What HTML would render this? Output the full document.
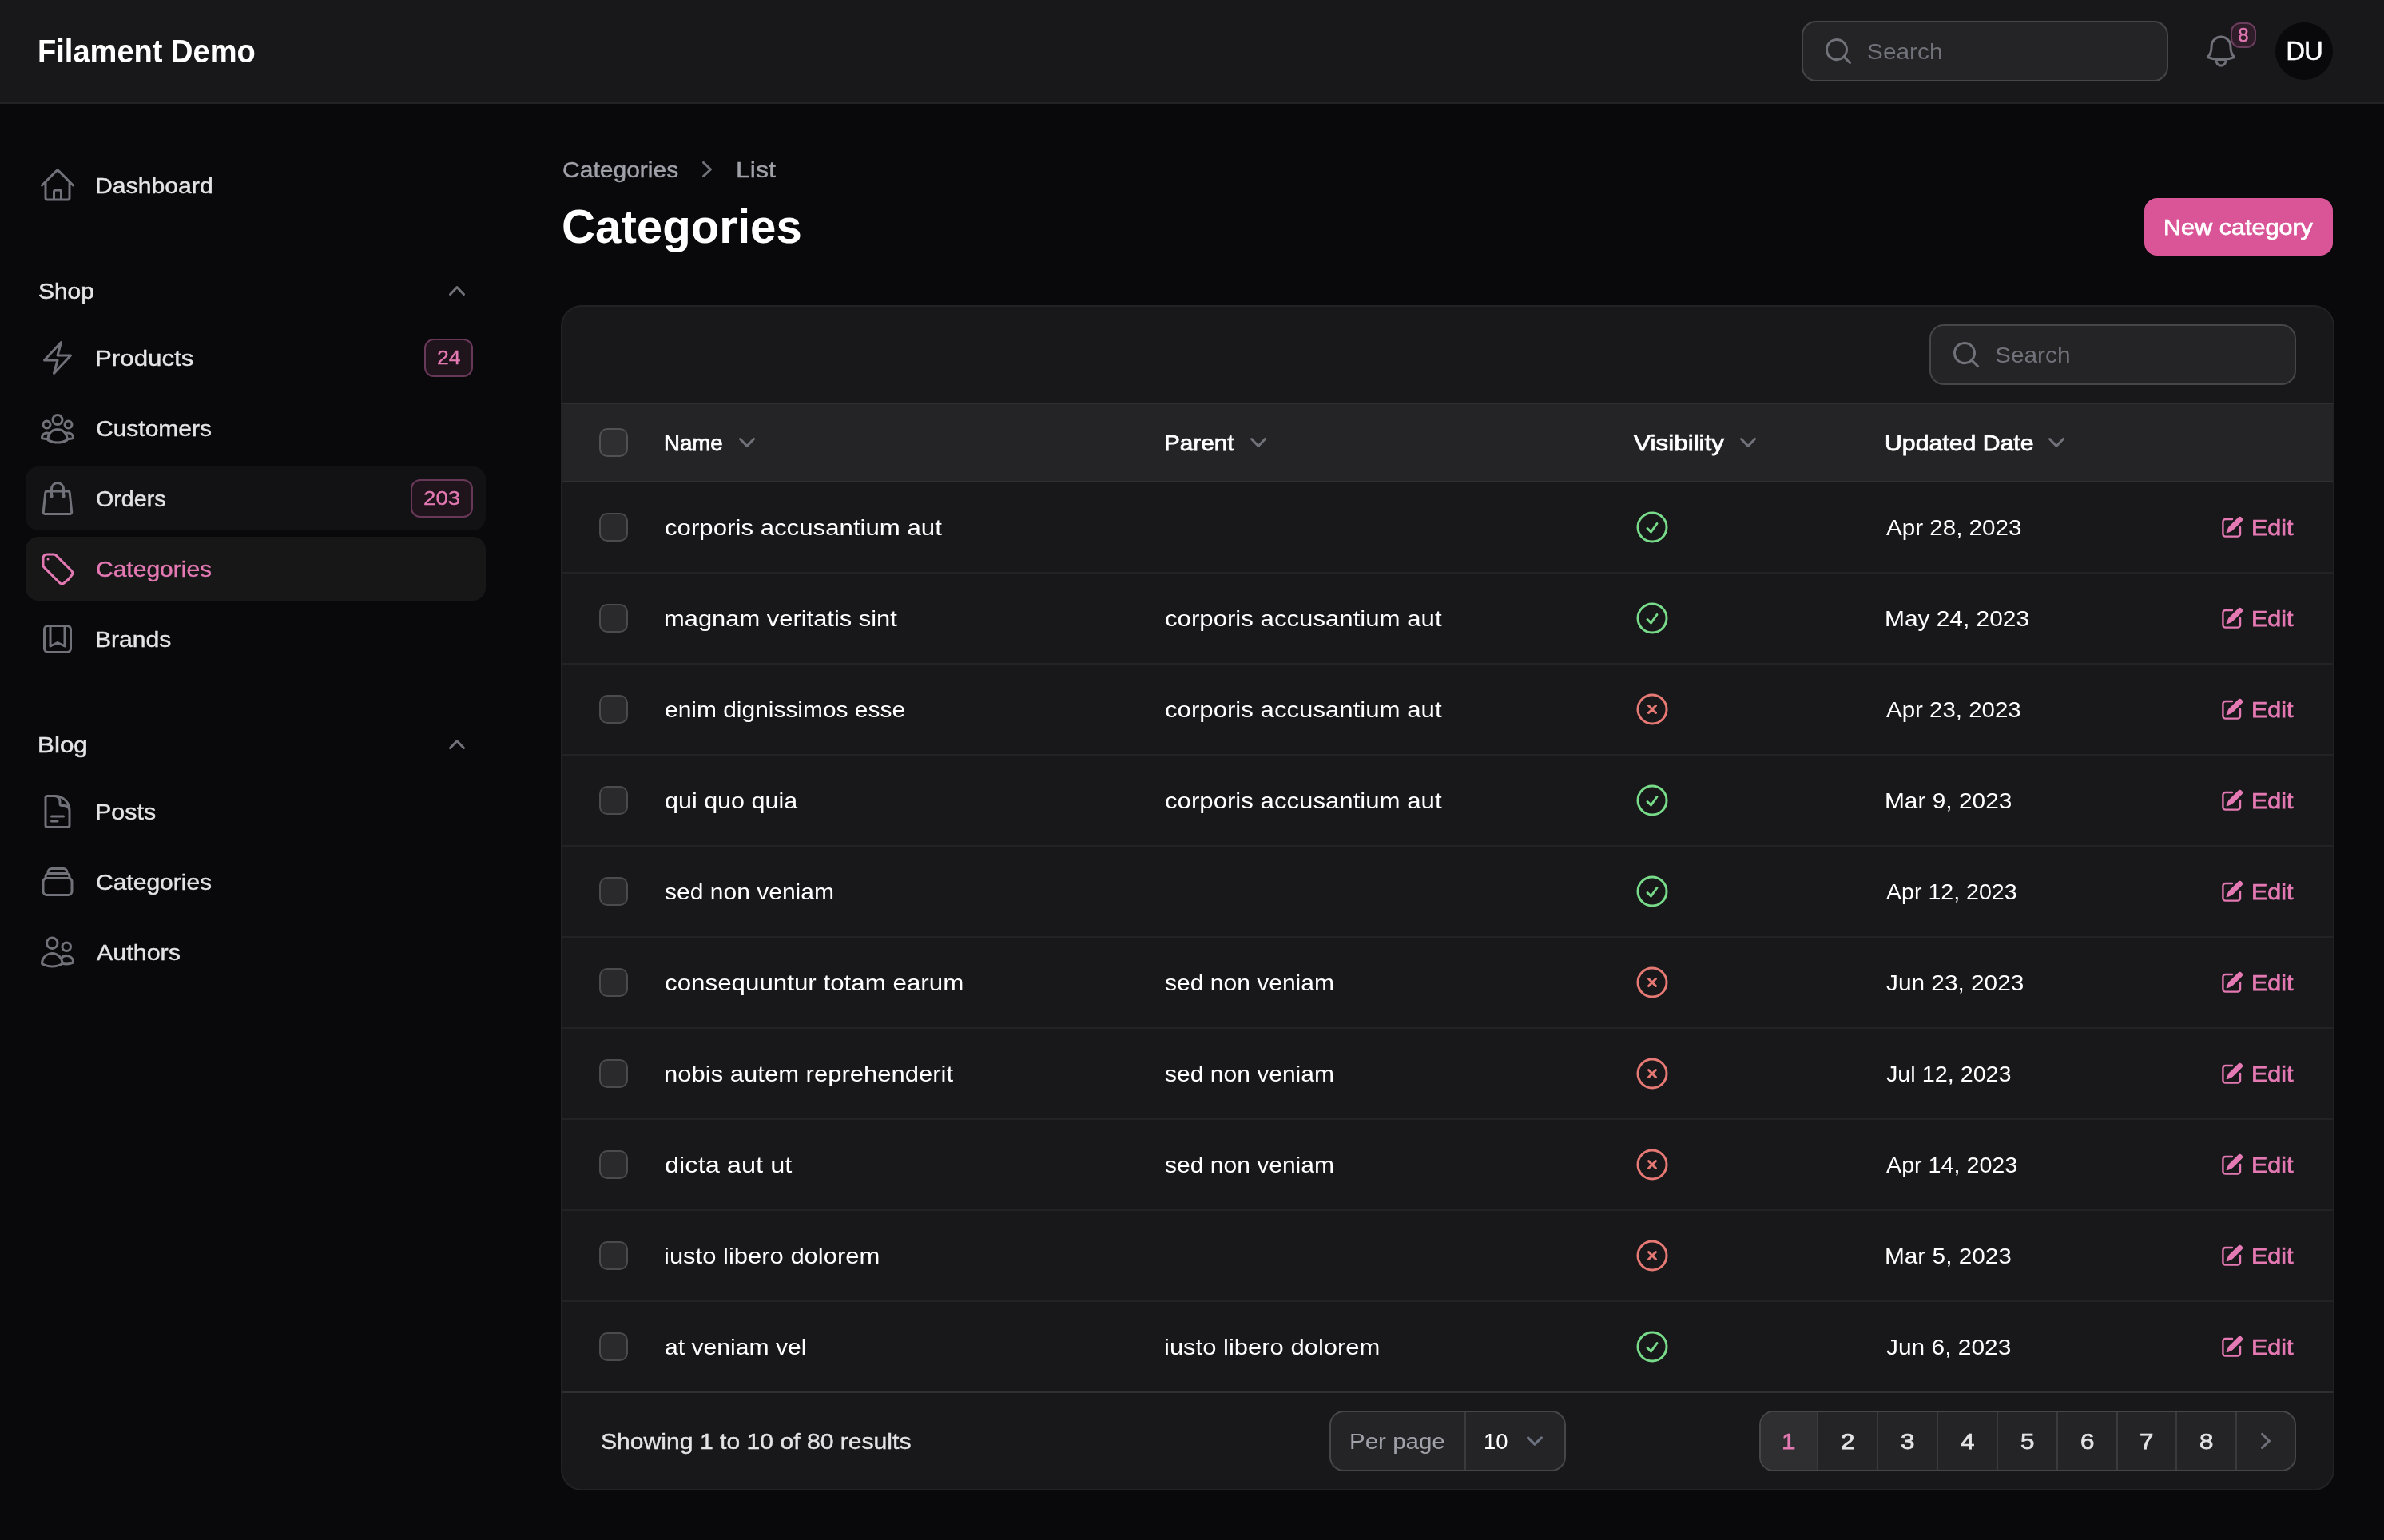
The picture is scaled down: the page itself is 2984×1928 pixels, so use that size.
<!DOCTYPE html>
<html lang="en">
<head>
<meta charset="utf-8">
<title>Categories - Filament Demo</title>
<style>
*{box-sizing:border-box;margin:0;padding:0}
@media (max-width:2000px){html{zoom:.5}}
html,body{width:2984px;height:1928px;overflow:hidden;background:#09090b}
body{font-family:"Liberation Sans",Arial,sans-serif;color:#fff;font-size:28px;line-height:40px;position:relative;-webkit-font-smoothing:antialiased}
.topbar,.sidebar,.crumbs,h1,.newbtn,.card{will-change:transform}
svg{display:block;flex:none}
.s{position:relative;top:1px;display:inline-block;transform-origin:0 50%}
.sb{display:inline-block;transform-origin:0 50%}
.m{-webkit-text-stroke:.4px currentColor}
.b6{-webkit-text-stroke:.75px currentColor}
.glabel .m{-webkit-text-stroke:.55px currentColor}
.ico{width:48px;height:48px;fill:none;stroke:currentColor;stroke-width:1.5;stroke-linecap:round;stroke-linejoin:round}
.mini{width:40px;height:40px;fill:currentColor}

/* ---------- topbar ---------- */
.topbar{position:absolute;left:0;top:0;width:2984px;height:128px;background:#18181b;box-shadow:0 2px 0 0 #232325;z-index:5}
.brand{position:absolute;left:49px;top:36px;font-size:40px;line-height:56px;font-weight:700;color:#fff;white-space:nowrap}
.gsearch{position:absolute;left:2257px;top:28px;width:455px;height:72px}
.inputbox{border-radius:16px;background:#242427;box-shadow:0 0 0 2px #464649;display:flex;align-items:center;padding-left:24px;color:#71717a}
.inputbox .mini{color:#71717a}
.inputbox .ph{margin-left:16px;color:#71717a}
.bell{position:absolute;left:2756px;top:40px;color:#71717a}
.bellbadge{position:absolute;left:2792px;top:28px;width:32px;height:32px;border-radius:12px;background:#2e1c29;box-shadow:inset 0 0 0 2px #6a3d5c;color:#e479b3;font-size:24px;line-height:32px;text-align:center;-webkit-text-stroke:.5px #e479b3}
.avatar{position:absolute;left:2848px;top:28px;width:72px;height:72px;border-radius:50%;background:#09090b;color:#fff;font-size:33px;line-height:72px;text-align:center;letter-spacing:-1.2px;-webkit-text-stroke:.4px #fff}

/* ---------- sidebar ---------- */
.sidebar{position:absolute;left:0;top:128px;width:640px;padding:64px 48px}
.group{margin-bottom:56px}
.glabel{height:72px;margin:0 -16px 8px;padding:0 16px;display:flex;align-items:center;justify-content:space-between;color:#e4e4e7;font-weight:500}
.glabel .mini{color:#71717a;margin-right:0}
.item{height:80px;margin:0 -16px 8px;padding:16px;border-radius:16px;display:flex;align-items:center;color:#e4e4e7;font-weight:500}
.item .ico{color:#71717a;margin-right:24px}
.item span.t{flex:1}
.item.hover{background:#121214}
.item.active{background:#171718;color:#e479b3}
.item.active .ico{color:#e479b3}
.badge{height:48px;min-width:48px;padding:8px 16px;border-radius:12px;background:#20141c;box-shadow:inset 0 0 0 2px #683858;color:#e479b3;font-size:24px;line-height:32px;text-align:center;-webkit-text-stroke:.3px #e479b3}

/* ---------- main ---------- */
.crumbs{position:absolute;left:704px;top:192px;height:40px;display:flex;align-items:center;color:#a1a1aa;font-weight:500;white-space:nowrap}
.crumbs .mini{margin:0 17px 0 16px;color:#71717a}
h1{position:absolute;left:704px;top:248px;font-size:60px;line-height:72px;font-weight:700;color:#fff;white-space:nowrap}
.newbtn{position:absolute;left:2684px;top:248px;width:236px;height:72px;border-radius:16px;background:#da5597;color:#fff;text-align:center;line-height:72px;white-space:nowrap}

.card{position:absolute;left:704px;top:384px;width:2216px;height:1480px;border-radius:24px;background:#18181b;box-shadow:0 0 0 2px #222224;overflow:hidden}
.toolbar{height:120px;position:relative}
.tsearch{position:absolute;left:1713px;top:24px;width:455px;height:72px}
.thead{height:98px;border-top:2px solid #2f2f32;background:#242427;display:flex;align-items:center;white-space:nowrap}
.row{height:114px;border-top:2px solid #232326;display:flex;align-items:center;white-space:nowrap}
.thead + .row{border-top-color:#2f2f32}
.c0{width:104px;padding-left:48px;flex:none}
.c1{width:626px;padding-left:24px;flex:none}
.c2{width:586px;padding-left:24px;flex:none}
.c3{width:316px;padding-left:24px;flex:none}
.c4{width:360px;padding-left:24px;flex:none}
.c5{flex:1;padding-right:50px;display:flex;justify-content:flex-end;align-items:center}
.thead > div{display:flex;align-items:center}
.thead .mini{margin-left:8px;color:#71717a}
.cb{display:block;width:32px;height:32px;border-radius:8px;background:#2a2a2d;box-shadow:0 0 0 2px #4b4b4e}
.thead .cb{background:#2f2f32;box-shadow:0 0 0 2px #515154}
.ok{color:#77db89}.no{color:#e77975}
.edit{display:flex;align-items:center;color:#e479b3}
.edit svg{width:32px;height:32px;fill:currentColor;margin-right:9px}
.tfoot{height:122px;border-top:2px solid #2f2f32;position:relative}
.showing{position:absolute;left:48px;top:40px;color:#e4e4e7;font-weight:500;white-space:nowrap}
.perpage{position:absolute;left:962px;top:24px;width:292px;height:72px;border-radius:16px;background:#242427;box-shadow:0 0 0 2px #464649;display:flex;align-items:center;white-space:nowrap}
.perpage .lab{width:169px;height:72px;line-height:72px;padding-left:24px;border-right:2px solid #3a3a3d;color:#a1a1aa}
.perpage .val{padding-left:23px;color:#fff;width:65px}
.perpage svg{width:42px;height:42px;fill:none;stroke:#6b7280;stroke-width:1.5;stroke-linecap:round;stroke-linejoin:round}
.pager{position:absolute;left:1500px;top:24px;width:668px;height:72px;border-radius:16px;background:#242427;box-shadow:0 0 0 2px #464649;display:flex;overflow:hidden;color:#e4e4e7;-webkit-text-stroke:.75px currentColor}
.pager div{height:72px;line-height:74px;text-align:center;border-left:1px solid #3a3a3d;border-right:1px solid #3a3a3d;flex:none}
.pd{display:inline-block;transform:scaleX(1.12)}
.pager div:first-child{border-left:0;background:#2f2f32;color:#e479b3}
.pager div:last-child{border-right:0;display:flex;align-items:center;justify-content:center;color:#71717a}
</style>
</head>
<body>

<div class="topbar">
  <div class="brand"><span class="sb" style="transform:scaleX(0.9514);margin:0 -13.93px 0 -1.85px">Filament Demo</span></div>
  <div class="gsearch inputbox">
    <svg class="mini" viewBox="0 0 20 20"><path fill-rule="evenodd" clip-rule="evenodd" d="M9 3.5a5.5 5.5 0 100 11 5.5 5.5 0 000-11zM2 9a7 7 0 1112.452 4.391l3.328 3.329a.75.75 0 11-1.06 1.06l-3.329-3.328A7 7 0 012 9z"/></svg>
    <div class="ph"><span class="s" style="transform:scaleX(1.0651);margin:0 5.78px 0 -0.07px">Search</span></div>
  </div>
  <svg class="ico bell" viewBox="0 0 24 24"><path d="M14.857 17.082a23.848 23.848 0 005.454-1.31A8.967 8.967 0 0118 9.75v-.7V9A6 6 0 006 9v.75a8.967 8.967 0 01-2.312 6.022c1.733.64 3.56 1.085 5.455 1.31m5.714 0a24.255 24.255 0 01-5.714 0m5.714 0a3 3 0 11-5.714 0"/></svg>
  <div class="bellbadge">8</div>
  <div class="avatar">DU</div>
</div>

<aside class="sidebar">
  <div class="group">
    <div class="item"><svg class="ico" viewBox="0 0 24 24"><path d="M2.25 12l8.954-8.955c.44-.439 1.152-.439 1.591 0L21.75 12M4.5 9.75v10.125c0 .621.504 1.125 1.125 1.125H9.75v-4.875c0-.621.504-1.125 1.125-1.125h2.25c.621 0 1.125.504 1.125 1.125V21h4.125c.621 0 1.125-.504 1.125-1.125V9.75M8.25 21h8.25"/></svg><span class="t"><span class="s m" style="transform:scaleX(1.0782);margin:0 10.71px 0 -1.16px">Dashboard</span></span></div>
  </div>
  <div class="group">
    <div class="glabel"><span class="s m" style="transform:scaleX(1.0683);margin:0 4.47px 0 -0.07px">Shop</span><svg class="mini" viewBox="0 0 20 20"><path fill-rule="evenodd" clip-rule="evenodd" d="M14.77 12.79a.75.75 0 01-1.06-.02L10 8.832 6.29 12.77a.75.75 0 11-1.08-1.04l4.25-4.5a.75.75 0 011.08 0l4.25 4.5a.75.75 0 01-.02 1.06z"/></svg></div>
    <div class="item"><svg class="ico" viewBox="0 0 24 24"><path d="M3.75 13.5l10.5-11.25L12 10.5h8.25L9.75 21.75 12 13.5H3.75z"/></svg><span class="t"><span class="s m" style="transform:scaleX(1.1167);margin:0 12.9px 0 -1.23px">Products</span></span><span class="badge"><span class="sb" style="transform:scaleX(1.1083);margin:0 2.77px 0 -0.11px">24</span></span></div>
    <div class="item"><svg class="ico" viewBox="0 0 24 24"><path d="M18 18.72a9.094 9.094 0 003.741-.479 3 3 0 00-4.682-2.72m.94 3.198l.001.031c0 .225-.012.447-.037.666A11.944 11.944 0 0112 21c-2.17 0-4.207-.576-5.963-1.584A6.062 6.062 0 016 18.719m12 0a5.971 5.971 0 00-.941-3.197m0 0A5.995 5.995 0 0012 12.75a5.995 5.995 0 00-5.058 2.772m0 0a3 3 0 00-4.681 2.72 8.986 8.986 0 003.74.477m.94-3.197a5.971 5.971 0 00-.94 3.197M15 6.75a3 3 0 11-6 0 3 3 0 016 0zm6 3a2.25 2.25 0 11-4.5 0 2.25 2.25 0 014.5 0zm-13.5 0a2.25 2.25 0 11-4.5 0 2.25 2.25 0 014.5 0z"/></svg><span class="t"><span class="s m" style="transform:scaleX(1.0707);margin:0 9.57px 0 -0.07px">Customers</span></span></div>
    <div class="item hover"><svg class="ico" viewBox="0 0 24 24"><path d="M15.75 10.5V6a3.75 3.75 0 10-7.5 0v4.5m11.356-1.993l1.263 12c.07.665-.45 1.243-1.119 1.243H4.25a1.125 1.125 0 01-1.12-1.243l1.264-12A1.125 1.125 0 015.513 7.5h12.974c.576 0 1.059.435 1.119 1.007zM8.625 10.5a.375.375 0 11-.75 0 .375.375 0 01.75 0zm7.5 0a.375.375 0 11-.75 0 .375.375 0 01.75 0z"/></svg><span class="t"><span class="s m" style="transform:scaleX(1.0238);margin:0 2.04px 0 -0.02px">Orders</span></span><span class="badge"><span class="sb" style="transform:scaleX(1.1528);margin:0 5.86px 0 -0.15px">203</span></span></div>
    <div class="item active"><svg class="ico" viewBox="0 0 24 24"><path d="M9.568 3H5.25A2.25 2.25 0 003 5.25v4.318c0 .597.237 1.17.659 1.591l9.581 9.581c.699.699 1.78.872 2.607.33a18.095 18.095 0 005.223-5.223c.542-.827.369-1.908-.33-2.607L11.16 3.66A2.25 2.25 0 009.568 3z"/><path d="M6 6h.008v.008H6V6z"/></svg><span class="t"><span class="s m" style="transform:scaleX(1.0716);margin:0 9.7px 0 -0.07px">Categories</span></span></div>
    <div class="item"><svg class="ico" viewBox="0 0 24 24"><path d="M16.5 3.75V16.5L12 14.25 7.5 16.5V3.75m9 0H18A2.25 2.25 0 0120.25 6v12A2.25 2.25 0 0118 20.25H6A2.25 2.25 0 013.75 18V6A2.25 2.25 0 016 3.75h1.5m9 0h-9"/></svg><span class="t"><span class="s m" style="transform:scaleX(1.0733);margin:0 6.5px 0 -1.15px">Brands</span></span></div>
  </div>
  <div class="group">
    <div class="glabel"><span class="s m" style="transform:scaleX(1.1212);margin:0 6.79px 0 -1.24px">Blog</span><svg class="mini" viewBox="0 0 20 20"><path fill-rule="evenodd" clip-rule="evenodd" d="M14.77 12.79a.75.75 0 01-1.06-.02L10 8.832 6.29 12.77a.75.75 0 11-1.08-1.04l4.25-4.5a.75.75 0 011.08 0l4.25 4.5a.75.75 0 01-.02 1.06z"/></svg></div>
    <div class="item"><svg class="ico" viewBox="0 0 24 24"><path d="M19.5 14.25v-2.625a3.375 3.375 0 00-3.375-3.375h-1.5A1.125 1.125 0 0113.5 7.125v-1.5a3.375 3.375 0 00-3.375-3.375H8.25m0 12.75h7.5m-7.5 3H12M10.5 2.25H5.625c-.621 0-1.125.504-1.125 1.125v17.25c0 .621.504 1.125 1.125 1.125h12.75c.621 0 1.125-.504 1.125-1.125V11.25a9 9 0 00-9-9z"/></svg><span class="t"><span class="s m" style="transform:scaleX(1.0881);margin:0 6.17px 0 -1.18px">Posts</span></span></div>
    <div class="item"><svg class="ico" viewBox="0 0 24 24"><path d="M6 6.878V6a2.25 2.25 0 012.25-2.25h7.5A2.25 2.25 0 0118 6v.878m-12 0c.235-.083.487-.128.75-.128h10.5c.263 0 .515.045.75.128m-12 0A2.25 2.25 0 004.5 9v.878m13.5-3A2.25 2.25 0 0119.5 9v.878m0 0a2.246 2.246 0 00-.75-.128H5.25c-.263 0-.515.045-.75.128m15 0A2.25 2.25 0 0121 12v6a2.25 2.25 0 01-2.25 2.25H5.25A2.25 2.25 0 013 18v-6c0-.98.626-1.813 1.5-2.122"/></svg><span class="t"><span class="s m" style="transform:scaleX(1.0716);margin:0 9.7px 0 -0.07px">Categories</span></span></div>
    <div class="item"><svg class="ico" viewBox="0 0 24 24"><path d="M15 19.128a9.38 9.38 0 002.625.372 9.337 9.337 0 004.121-.952 4.125 4.125 0 00-7.533-2.493M15 19.128v-.003c0-1.113-.285-2.16-.786-3.07M15 19.128v.106A12.318 12.318 0 018.624 21c-2.331 0-4.512-.645-6.374-1.766l-.001-.109a6.375 6.375 0 0111.964-3.07M12 6.375a3.375 3.375 0 11-6.75 0 3.375 3.375 0 016.75 0zm8.25 2.25a2.625 2.625 0 11-5.25 0 2.625 2.625 0 015.25 0z"/></svg><span class="t"><span class="s m" style="transform:scaleX(1.0875);margin:0 8.44px 0 1.0px">Authors</span></span></div>
  </div>
</aside>

<div class="crumbs"><span class="s m" style="transform:scaleX(1.0724);margin:0 9.8px 0 -0.07px">Categories</span><svg class="mini" viewBox="0 0 20 20"><path fill-rule="evenodd" clip-rule="evenodd" d="M7.21 14.77a.75.75 0 01.02-1.06L11.168 10 7.23 6.29a.75.75 0 111.04-1.08l4.5 4.25a.75.75 0 010 1.08l-4.5 4.25a.75.75 0 01-1.06-.02z"/></svg><span class="s m" style="transform:scaleX(1.1476);margin:0 6.43px 0 -1.3px">List</span></div>
<h1><span class="sb" style="transform:scaleX(0.9699);margin:0 -9.33px 0 -0.94px">Categories</span></h1>
<div class="newbtn"><span class="s b6" style="transform:scaleX(1.0917);margin:0 15.7px 0 -1.18px">New category</span></div>

<div class="card">
  <div class="toolbar">
    <div class="tsearch inputbox">
      <svg class="mini" viewBox="0 0 20 20"><path fill-rule="evenodd" clip-rule="evenodd" d="M9 3.5a5.5 5.5 0 100 11 5.5 5.5 0 000-11zM2 9a7 7 0 1112.452 4.391l3.328 3.329a.75.75 0 11-1.06 1.06l-3.329-3.328A7 7 0 012 9z"/></svg>
      <div class="ph"><span class="s" style="transform:scaleX(1.0651);margin:0 5.78px 0 -0.07px">Search</span></div>
    </div>
  </div>
  <div class="thead"><div class="c0"><i class="cb"></i></div><div class="c1"><span class="s b6" style="transform:scaleX(0.9861);margin:0 -1.04px 0 -0.97px">Name</span><i style="width:2px"></i><svg class="mini" viewBox="0 0 20 20"><path fill-rule="evenodd" clip-rule="evenodd" d="M5.23 7.21a.75.75 0 011.06.02L10 11.168l3.71-3.938a.75.75 0 111.08 1.04l-4.25 4.5a.75.75 0 01-1.08 0l-4.25-4.5a.75.75 0 01.02-1.06z"/></svg></div><div class="c2"><span class="s b6" style="transform:scaleX(1.0593);margin:0 4.89px 0 -1.12px">Parent</span><i style="width:3px"></i><svg class="mini" viewBox="0 0 20 20"><path fill-rule="evenodd" clip-rule="evenodd" d="M5.23 7.21a.75.75 0 011.06.02L10 11.168l3.71-3.938a.75.75 0 111.08 1.04l-4.25 4.5a.75.75 0 01-1.08 0l-4.25-4.5a.75.75 0 01.02-1.06z"/></svg></div><div class="c3"><span class="s b6" style="transform:scaleX(1.1238);margin:0 12.46px 0 1.0px">Visibility</span><i style="width:2px"></i><svg class="mini" viewBox="0 0 20 20"><path fill-rule="evenodd" clip-rule="evenodd" d="M5.23 7.21a.75.75 0 011.06.02L10 11.168l3.71-3.938a.75.75 0 111.08 1.04l-4.25 4.5a.75.75 0 01-1.08 0l-4.25-4.5a.75.75 0 01.02-1.06z"/></svg></div><div class="c4"><span class="s b6" style="transform:scaleX(1.0794);margin:0 13.72px 0 -1.16px">Updated Date</span><i style="width:1px"></i><svg class="mini" viewBox="0 0 20 20"><path fill-rule="evenodd" clip-rule="evenodd" d="M5.23 7.21a.75.75 0 011.06.02L10 11.168l3.71-3.938a.75.75 0 111.08 1.04l-4.25 4.5a.75.75 0 01-1.08 0l-4.25-4.5a.75.75 0 01.02-1.06z"/></svg></div><div class="c5"></div></div>
  <div class="row"><div class="c0"><i class="cb"></i></div><div class="c1"><span class="s" style="transform:scaleX(1.1145);margin:0 35.64px 0 -0.11px">corporis accusantium aut</span></div><div class="c2"></div><div class="c3"><svg class="ico ok" viewBox="0 0 24 24"><path d="M9 12.75L11.25 15 15 9.75M21 12a9 9 0 11-18 0 9 9 0 0118 0z"/></svg></div><div class="c4"><span class="s" style="transform:scaleX(1.0566);margin:0 9.08px 0 1.0px">Apr 28, 2023</span></div><div class="c5"><span class="edit"><svg viewBox="0 0 20 20"><path d="M5.433 13.917l1.262-3.155A4 4 0 017.58 9.42l6.92-6.918a2.121 2.121 0 013 3l-6.92 6.918c-.383.383-.84.685-1.343.886l-3.154 1.262a.5.5 0 01-.65-.65z"/><path d="M3.5 5.75c0-.69.56-1.25 1.25-1.25H10A.75.75 0 0010 3H4.75A2.75 2.75 0 002 5.75v9.5A2.75 2.75 0 004.75 18h9.5A2.75 2.75 0 0017 15.25V10a.75.75 0 00-1.5 0v5.25c0 .69-.56 1.25-1.25 1.25h-9.5c-.69 0-1.25-.56-1.25-1.25v-9.5z"/></svg><span class="s b6" style="transform:scaleX(1.087);margin:0 4.2px 0 -1.17px">Edit</span></span></div></div>
  <div class="row"><div class="c0"><i class="cb"></i></div><div class="c1"><span class="s" style="transform:scaleX(1.1034);margin:0 27.35px 0 -1.21px">magnam veritatis sint</span></div><div class="c2"><span class="s" style="transform:scaleX(1.1135);margin:0 35.33px 0 -0.11px">corporis accusantium aut</span></div><div class="c3"><svg class="ico ok" viewBox="0 0 24 24"><path d="M9 12.75L11.25 15 15 9.75M21 12a9 9 0 11-18 0 9 9 0 0118 0z"/></svg></div><div class="c4"><span class="s" style="transform:scaleX(1.0671);margin:0 11.38px 0 -1.13px">May 24, 2023</span></div><div class="c5"><span class="edit"><svg viewBox="0 0 20 20"><path d="M5.433 13.917l1.262-3.155A4 4 0 017.58 9.42l6.92-6.918a2.121 2.121 0 013 3l-6.92 6.918c-.383.383-.84.685-1.343.886l-3.154 1.262a.5.5 0 01-.65-.65z"/><path d="M3.5 5.75c0-.69.56-1.25 1.25-1.25H10A.75.75 0 0010 3H4.75A2.75 2.75 0 002 5.75v9.5A2.75 2.75 0 004.75 18h9.5A2.75 2.75 0 0017 15.25V10a.75.75 0 00-1.5 0v5.25c0 .69-.56 1.25-1.25 1.25h-9.5c-.69 0-1.25-.56-1.25-1.25v-9.5z"/></svg><span class="s b6" style="transform:scaleX(1.087);margin:0 4.2px 0 -1.17px">Edit</span></span></div></div>
  <div class="row"><div class="c0"><i class="cb"></i></div><div class="c1"><span class="s" style="transform:scaleX(1.0689);margin:0 19.41px 0 -0.07px">enim dignissimos esse</span></div><div class="c2"><span class="s" style="transform:scaleX(1.1135);margin:0 35.33px 0 -0.11px">corporis accusantium aut</span></div><div class="c3"><svg class="ico no" viewBox="0 0 24 24"><path d="M9.75 9.75l4.5 4.5m0-4.5l-4.5 4.5M21 12a9 9 0 11-18 0 9 9 0 0118 0z"/></svg></div><div class="c4"><span class="s" style="transform:scaleX(1.0522);margin:0 8.37px 0 1.0px">Apr 23, 2023</span></div><div class="c5"><span class="edit"><svg viewBox="0 0 20 20"><path d="M5.433 13.917l1.262-3.155A4 4 0 017.58 9.42l6.92-6.918a2.121 2.121 0 013 3l-6.92 6.918c-.383.383-.84.685-1.343.886l-3.154 1.262a.5.5 0 01-.65-.65z"/><path d="M3.5 5.75c0-.69.56-1.25 1.25-1.25H10A.75.75 0 0010 3H4.75A2.75 2.75 0 002 5.75v9.5A2.75 2.75 0 004.75 18h9.5A2.75 2.75 0 0017 15.25V10a.75.75 0 00-1.5 0v5.25c0 .69-.56 1.25-1.25 1.25h-9.5c-.69 0-1.25-.56-1.25-1.25v-9.5z"/></svg><span class="s b6" style="transform:scaleX(1.087);margin:0 4.2px 0 -1.17px">Edit</span></span></div></div>
  <div class="row"><div class="c0"><i class="cb"></i></div><div class="c1"><span class="s" style="transform:scaleX(1.0888);margin:0 13.55px 0 -0.09px">qui quo quia</span></div><div class="c2"><span class="s" style="transform:scaleX(1.1135);margin:0 35.33px 0 -0.11px">corporis accusantium aut</span></div><div class="c3"><svg class="ico ok" viewBox="0 0 24 24"><path d="M9 12.75L11.25 15 15 9.75M21 12a9 9 0 11-18 0 9 9 0 0118 0z"/></svg></div><div class="c4"><span class="s" style="transform:scaleX(1.0664);margin:0 9.92px 0 -1.13px">Mar 9, 2023</span></div><div class="c5"><span class="edit"><svg viewBox="0 0 20 20"><path d="M5.433 13.917l1.262-3.155A4 4 0 017.58 9.42l6.92-6.918a2.121 2.121 0 013 3l-6.92 6.918c-.383.383-.84.685-1.343.886l-3.154 1.262a.5.5 0 01-.65-.65z"/><path d="M3.5 5.75c0-.69.56-1.25 1.25-1.25H10A.75.75 0 0010 3H4.75A2.75 2.75 0 002 5.75v9.5A2.75 2.75 0 004.75 18h9.5A2.75 2.75 0 0017 15.25V10a.75.75 0 00-1.5 0v5.25c0 .69-.56 1.25-1.25 1.25h-9.5c-.69 0-1.25-.56-1.25-1.25v-9.5z"/></svg><span class="s b6" style="transform:scaleX(1.087);margin:0 4.2px 0 -1.17px">Edit</span></span></div></div>
  <div class="row"><div class="c0"><i class="cb"></i></div><div class="c1"><span class="s" style="transform:scaleX(1.0723);margin:0 14.29px 0 -0.07px">sed non veniam</span></div><div class="c2"></div><div class="c3"><svg class="ico ok" viewBox="0 0 24 24"><path d="M9 12.75L11.25 15 15 9.75M21 12a9 9 0 11-18 0 9 9 0 0118 0z"/></svg></div><div class="c4"><span class="s" style="transform:scaleX(1.0201);margin:0 3.22px 0 1.0px">Apr 12, 2023</span></div><div class="c5"><span class="edit"><svg viewBox="0 0 20 20"><path d="M5.433 13.917l1.262-3.155A4 4 0 017.58 9.42l6.92-6.918a2.121 2.121 0 013 3l-6.92 6.918c-.383.383-.84.685-1.343.886l-3.154 1.262a.5.5 0 01-.65-.65z"/><path d="M3.5 5.75c0-.69.56-1.25 1.25-1.25H10A.75.75 0 0010 3H4.75A2.75 2.75 0 002 5.75v9.5A2.75 2.75 0 004.75 18h9.5A2.75 2.75 0 0017 15.25V10a.75.75 0 00-1.5 0v5.25c0 .69-.56 1.25-1.25 1.25h-9.5c-.69 0-1.25-.56-1.25-1.25v-9.5z"/></svg><span class="s b6" style="transform:scaleX(1.087);margin:0 4.2px 0 -1.17px">Edit</span></span></div></div>
  <div class="row"><div class="c0"><i class="cb"></i></div><div class="c1"><span class="s" style="transform:scaleX(1.1184);margin:0 39.62px 0 -0.12px">consequuntur totam earum</span></div><div class="c2"><span class="s" style="transform:scaleX(1.0723);margin:0 14.29px 0 -0.07px">sed non veniam</span></div><div class="c3"><svg class="ico no" viewBox="0 0 24 24"><path d="M9.75 9.75l4.5 4.5m0-4.5l-4.5 4.5M21 12a9 9 0 11-18 0 9 9 0 0118 0z"/></svg></div><div class="c4"><span class="s" style="transform:scaleX(1.064);margin:0 10.36px 0 1.0px">Jun 23, 2023</span></div><div class="c5"><span class="edit"><svg viewBox="0 0 20 20"><path d="M5.433 13.917l1.262-3.155A4 4 0 017.58 9.42l6.92-6.918a2.121 2.121 0 013 3l-6.92 6.918c-.383.383-.84.685-1.343.886l-3.154 1.262a.5.5 0 01-.65-.65z"/><path d="M3.5 5.75c0-.69.56-1.25 1.25-1.25H10A.75.75 0 0010 3H4.75A2.75 2.75 0 002 5.75v9.5A2.75 2.75 0 004.75 18h9.5A2.75 2.75 0 0017 15.25V10a.75.75 0 00-1.5 0v5.25c0 .69-.56 1.25-1.25 1.25h-9.5c-.69 0-1.25-.56-1.25-1.25v-9.5z"/></svg><span class="s b6" style="transform:scaleX(1.087);margin:0 4.2px 0 -1.17px">Edit</span></span></div></div>
  <div class="row"><div class="c0"><i class="cb"></i></div><div class="c1"><span class="s" style="transform:scaleX(1.1077);margin:0 35.2px 0 -1.22px">nobis autem reprehenderit</span></div><div class="c2"><span class="s" style="transform:scaleX(1.0723);margin:0 14.29px 0 -0.07px">sed non veniam</span></div><div class="c3"><svg class="ico no" viewBox="0 0 24 24"><path d="M9.75 9.75l4.5 4.5m0-4.5l-4.5 4.5M21 12a9 9 0 11-18 0 9 9 0 0118 0z"/></svg></div><div class="c4"><span class="s" style="transform:scaleX(1.0263);margin:0 4.01px 0 1.0px">Jul 12, 2023</span></div><div class="c5"><span class="edit"><svg viewBox="0 0 20 20"><path d="M5.433 13.917l1.262-3.155A4 4 0 017.58 9.42l6.92-6.918a2.121 2.121 0 013 3l-6.92 6.918c-.383.383-.84.685-1.343.886l-3.154 1.262a.5.5 0 01-.65-.65z"/><path d="M3.5 5.75c0-.69.56-1.25 1.25-1.25H10A.75.75 0 0010 3H4.75A2.75 2.75 0 002 5.75v9.5A2.75 2.75 0 004.75 18h9.5A2.75 2.75 0 0017 15.25V10a.75.75 0 00-1.5 0v5.25c0 .69-.56 1.25-1.25 1.25h-9.5c-.69 0-1.25-.56-1.25-1.25v-9.5z"/></svg><span class="s b6" style="transform:scaleX(1.087);margin:0 4.2px 0 -1.17px">Edit</span></span></div></div>
  <div class="row"><div class="c0"><i class="cb"></i></div><div class="c1"><span class="s" style="transform:scaleX(1.1632);margin:0 22.36px 0 -0.16px">dicta aut ut</span></div><div class="c2"><span class="s" style="transform:scaleX(1.0723);margin:0 14.29px 0 -0.07px">sed non veniam</span></div><div class="c3"><svg class="ico no" viewBox="0 0 24 24"><path d="M9.75 9.75l4.5 4.5m0-4.5l-4.5 4.5M21 12a9 9 0 11-18 0 9 9 0 0118 0z"/></svg></div><div class="c4"><span class="s" style="transform:scaleX(1.0245);margin:0 3.93px 0 1.0px">Apr 14, 2023</span></div><div class="c5"><span class="edit"><svg viewBox="0 0 20 20"><path d="M5.433 13.917l1.262-3.155A4 4 0 017.58 9.42l6.92-6.918a2.121 2.121 0 013 3l-6.92 6.918c-.383.383-.84.685-1.343.886l-3.154 1.262a.5.5 0 01-.65-.65z"/><path d="M3.5 5.75c0-.69.56-1.25 1.25-1.25H10A.75.75 0 0010 3H4.75A2.75 2.75 0 002 5.75v9.5A2.75 2.75 0 004.75 18h9.5A2.75 2.75 0 0017 15.25V10a.75.75 0 00-1.5 0v5.25c0 .69-.56 1.25-1.25 1.25h-9.5c-.69 0-1.25-.56-1.25-1.25v-9.5z"/></svg><span class="s b6" style="transform:scaleX(1.087);margin:0 4.2px 0 -1.17px">Edit</span></span></div></div>
  <div class="row"><div class="c0"><i class="cb"></i></div><div class="c1"><span class="s" style="transform:scaleX(1.1062);margin:0 25.95px 0 -1.21px">iusto libero dolorem</span></div><div class="c2"></div><div class="c3"><svg class="ico no" viewBox="0 0 24 24"><path d="M9.75 9.75l4.5 4.5m0-4.5l-4.5 4.5M21 12a9 9 0 11-18 0 9 9 0 0118 0z"/></svg></div><div class="c4"><span class="s" style="transform:scaleX(1.0637);margin:0 9.52px 0 -1.13px">Mar 5, 2023</span></div><div class="c5"><span class="edit"><svg viewBox="0 0 20 20"><path d="M5.433 13.917l1.262-3.155A4 4 0 017.58 9.42l6.92-6.918a2.121 2.121 0 013 3l-6.92 6.918c-.383.383-.84.685-1.343.886l-3.154 1.262a.5.5 0 01-.65-.65z"/><path d="M3.5 5.75c0-.69.56-1.25 1.25-1.25H10A.75.75 0 0010 3H4.75A2.75 2.75 0 002 5.75v9.5A2.75 2.75 0 004.75 18h9.5A2.75 2.75 0 0017 15.25V10a.75.75 0 00-1.5 0v5.25c0 .69-.56 1.25-1.25 1.25h-9.5c-.69 0-1.25-.56-1.25-1.25v-9.5z"/></svg><span class="s b6" style="transform:scaleX(1.087);margin:0 4.2px 0 -1.17px">Edit</span></span></div></div>
  <div class="row"><div class="c0"><i class="cb"></i></div><div class="c1"><span class="s" style="transform:scaleX(1.0753);margin:0 12.42px 0 -0.08px">at veniam vel</span></div><div class="c2"><span class="s" style="transform:scaleX(1.1066);margin:0 26.05px 0 -1.21px">iusto libero dolorem</span></div><div class="c3"><svg class="ico ok" viewBox="0 0 24 24"><path d="M9 12.75L11.25 15 15 9.75M21 12a9 9 0 11-18 0 9 9 0 0118 0z"/></svg></div><div class="c4"><span class="s" style="transform:scaleX(1.0683);margin:0 10.0px 0 1.0px">Jun 6, 2023</span></div><div class="c5"><span class="edit"><svg viewBox="0 0 20 20"><path d="M5.433 13.917l1.262-3.155A4 4 0 017.58 9.42l6.92-6.918a2.121 2.121 0 013 3l-6.92 6.918c-.383.383-.84.685-1.343.886l-3.154 1.262a.5.5 0 01-.65-.65z"/><path d="M3.5 5.75c0-.69.56-1.25 1.25-1.25H10A.75.75 0 0010 3H4.75A2.75 2.75 0 002 5.75v9.5A2.75 2.75 0 004.75 18h9.5A2.75 2.75 0 0017 15.25V10a.75.75 0 00-1.5 0v5.25c0 .69-.56 1.25-1.25 1.25h-9.5c-.69 0-1.25-.56-1.25-1.25v-9.5z"/></svg><span class="s b6" style="transform:scaleX(1.087);margin:0 4.2px 0 -1.17px">Edit</span></span></div></div>
  <div class="tfoot"><div class="showing"><span class="s m" style="transform:scaleX(1.0758);margin:0 27.37px 0 -0.08px">Showing 1 to 10 of 80 results</span></div><div class="perpage"><div class="lab"><span class="s" style="transform:scaleX(1.0541);margin:0 6.15px 0 -1.11px">Per page</span></div><div class="val"><span class="s" style="transform:scaleX(0.9786);margin:0 -0.67px 0 -0.96px">10</span></div><svg viewBox="0 0 20 20"><path d="M6 8l4 4 4-4"/></svg></div><div class="pager"><div style="width:71px"><span class="pd">1</span></div><div style="width:75px"><span class="pd">2</span></div><div style="width:75px"><span class="pd">3</span></div><div style="width:75px"><span class="pd">4</span></div><div style="width:75px"><span class="pd">5</span></div><div style="width:75px"><span class="pd">6</span></div><div style="width:74px"><span class="pd">7</span></div><div style="width:75px"><span class="pd">8</span></div><div style="width:73px"><svg class="mini" viewBox="0 0 20 20"><path fill-rule="evenodd" clip-rule="evenodd" d="M7.21 14.77a.75.75 0 01.02-1.06L11.168 10 7.23 6.29a.75.75 0 111.04-1.08l4.5 4.25a.75.75 0 010 1.08l-4.5 4.25a.75.75 0 01-1.06-.02z"/></svg></div></div></div>
</div>

</body>
</html>
